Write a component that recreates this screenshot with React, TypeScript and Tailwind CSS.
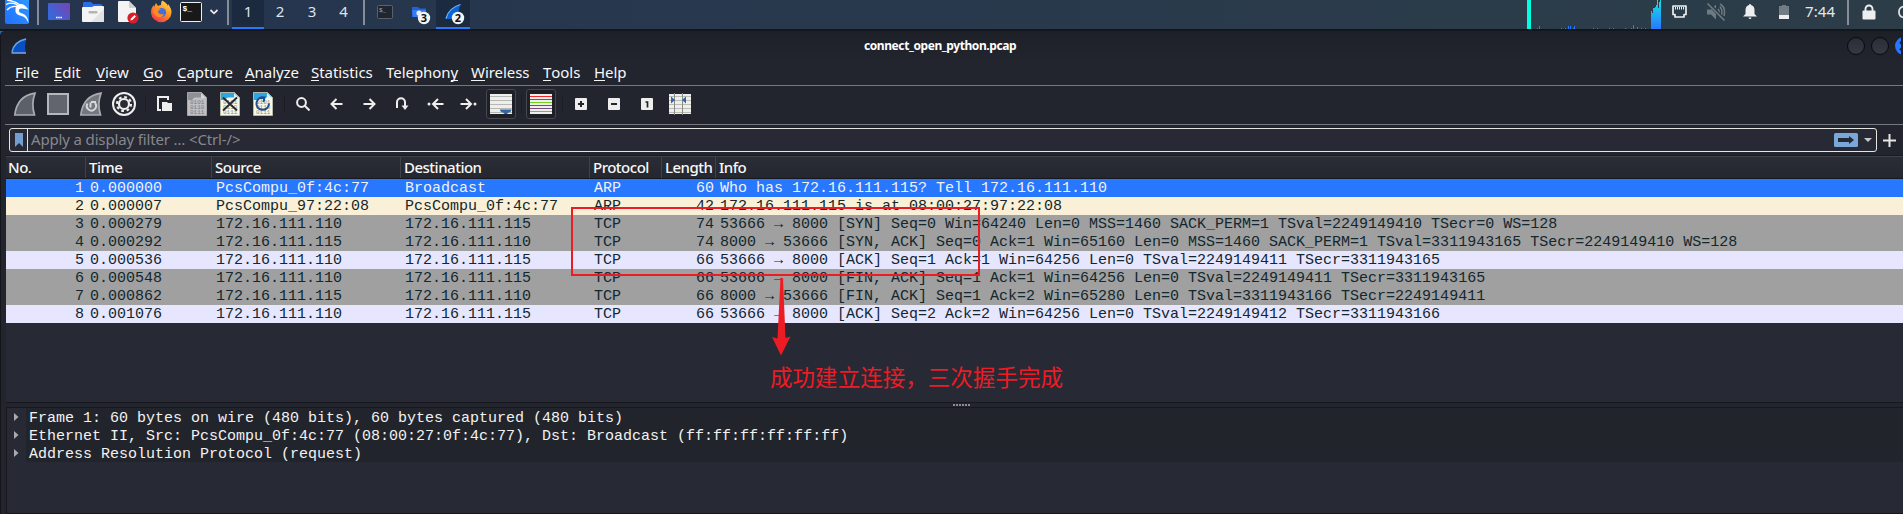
import React from "react";

const S = ({ w, h, c = "", children }: { w: number; h: number; c?: string; children: React.ReactNode }) => (
  <svg width={w} height={h} viewBox={`0 0 ${w} ${h}`} className={`block shrink-0 ${c}`}>
    {children}
  </svg>
);

const menus = [
  ["", "F", "ile", "w-[39px]"],
  ["", "E", "dit", "w-[42px]"],
  ["", "V", "iew", "w-[47px]"],
  ["", "G", "o", "w-[34px]"],
  ["", "C", "apture", "w-[68px]"],
  ["", "A", "nalyze", "w-[66px]"],
  ["", "S", "tatistics", "w-[75px]"],
  ["Telephon", "y", "", "w-[85px]"],
  ["", "W", "ireless", "w-[72px]"],
  ["", "T", "ools", "w-[51px]"],
  ["", "H", "elp", "w-[40px]"],
];

const rows = [
  ["1", "0.000000", "PcsCompu_0f:4c:77", "Broadcast", "ARP", "60", "Who has 172.16.111.115? Tell 172.16.111.110", "bg-[#2777ff] text-[#f2f2f2]"],
  ["2", "0.000007", "PcsCompu_97:22:08", "PcsCompu_0f:4c:77", "ARP", "42", "172.16.111.115 is at 08:00:27:97:22:08", "bg-[#faf0d7] text-[#12272e]"],
  ["3", "0.000279", "172.16.111.110", "172.16.111.115", "TCP", "74", "53666 → 8000 [SYN] Seq=0 Win=64240 Len=0 MSS=1460 SACK_PERM=1 TSval=2249149410 TSecr=0 WS=128", "bg-[#a0a0a0] text-[#12272e]"],
  ["4", "0.000292", "172.16.111.115", "172.16.111.110", "TCP", "74", "8000 → 53666 [SYN, ACK] Seq=0 Ack=1 Win=65160 Len=0 MSS=1460 SACK_PERM=1 TSval=3311943165 TSecr=2249149410 WS=128", "bg-[#a0a0a0] text-[#12272e]"],
  ["5", "0.000536", "172.16.111.110", "172.16.111.115", "TCP", "66", "53666 → 8000 [ACK] Seq=1 Ack=1 Win=64256 Len=0 TSval=2249149411 TSecr=3311943165", "bg-[#e7e6ff] text-[#12272e]"],
  ["6", "0.000548", "172.16.111.110", "172.16.111.115", "TCP", "66", "53666 → 8000 [FIN, ACK] Seq=1 Ack=1 Win=64256 Len=0 TSval=2249149411 TSecr=3311943165", "bg-[#a0a0a0] text-[#12272e]"],
  ["7", "0.000862", "172.16.111.115", "172.16.111.110", "TCP", "66", "8000 → 53666 [FIN, ACK] Seq=1 Ack=2 Win=65280 Len=0 TSval=3311943166 TSecr=2249149411", "bg-[#a0a0a0] text-[#12272e]"],
  ["8", "0.001076", "172.16.111.110", "172.16.111.115", "TCP", "66", "53666 → 8000 [ACK] Seq=2 Ack=2 Win=64256 Len=0 TSval=2249149412 TSecr=3311943166", "bg-[#e7e6ff] text-[#12272e]"],
];

const Info = ({ text }: { text: string }) => {
  const [a, b] = text.split("→");
  if (b === undefined) return <>{text}</>;
  return (
    <>
      {a}
      <span className="inline-block h-[18px] w-[9px] overflow-visible align-top">→</span>
      {b}
    </>
  );
};

const details = [
  "Frame 1: 60 bytes on wire (480 bits), 60 bytes captured (480 bits)",
  "Ethernet II, Src: PcsCompu_0f:4c:77 (08:00:27:0f:4c:77), Dst: Broadcast (ff:ff:ff:ff:ff:ff)",
  "Address Resolution Protocol (request)",
];

const Sep = ({ c }: { c: string }) => <div className={`h-[25px] w-[2px] shrink-0 bg-[#878d96] ${c}`} />;

const netBars = [[38, 1], [40, 3], [62, 1], [66, 1], [69, 3], [71, 3], [74, 1], [75, 3], [94, 1], [98, 1], [110, 1], [114, 1], [126, 1], [132, 1], [134, 4], [138, 2], [142, 1], [146, 1]];

function Panel() {
  return (
    <div className="flex h-[29px] items-start overflow-hidden bg-linear-to-r from-[#24344d] via-[#29394d] to-[#2c3d48]">
      <S w={27} h={25} c="ml-[4px]">
        <defs>
          <linearGradient id="kg" x1="0" y1="1" x2="1" y2="0"><stop offset="0" stopColor="#2270ff" /><stop offset="1" stopColor="#2c9bff" /></linearGradient>
        </defs>
        <rect x="1" y="-4" width="24" height="28" rx="2" fill="url(#kg)" />
        <path d="M2 4.500Q8 1.500 14 5.500M3 10Q8 5 14 7M3 0Q11 1 16 5" stroke="#fff" strokeWidth="1.300" fill="none" />
        <path d="M13 5Q18 2.500 21.500 6L24.500 9.500 20 8.800Q15.500 8 15 10 14.500 12.500 18.500 13.500 24 15.500 24.500 23 22 17 17.500 16 10.500 14.500 11.500 9 11.500 6 13 5Z" fill="#fff" />
      </S>
      <Sep c="ml-[6px]" />
      <S w={22} h={20} c="ml-[9px]">
        <defs><linearGradient id="dg" x1="0" y1="0.6" x2="1" y2="0"><stop offset="0" stopColor="#3569dd" /><stop offset="1" stopColor="#7b42b0" /></linearGradient></defs>
        <rect y="3" width="22" height="17" rx="1" fill="url(#dg)" />
        <path d="M8 17.5h6" stroke="#fff" strokeWidth="1.4" strokeDasharray="1.5 .7" />
      </S>
      <S w={22} h={23} c="ml-[12px]">
        <path d="M1 3q0-1 1-1h7l2 2h8q1 0 1 1v8H1z" fill="#2d6be8" />
        <path d="M0 8q0-1 1-1h9l2-1h9q1 0 1 1v14q0 1-1 1H1q-1 0-1-1z" fill="#f4f4f4" />
        <path d="M22 9v12q0 1-1 1H9z" fill="#e2e2e2" />
        <rect x="6.500" y="11" width="9" height="2.400" rx="1.200" fill="#b4b4b4" />
      </S>
      <S w={22} h={24} c="ml-[14px]">
        <path d="M0 2q0-1 1-1h10l7 7v13q0 1-1 1H1q-1 0-1-1z" fill="#f4f4f4" />
        <path d="M11 1l7 7h-6q-1 0-1-1z" fill="#cfcfcf" />
        <circle cx="15" cy="18" r="5.600" fill="#d81e26" />
        <path d="M12.500 20.500l.5-2 3.500-3.500 1.400 1.400-3.500 3.500z" fill="#fff" />
      </S>
      <S w={22} h={24} c="ml-[10px]">
        <defs>
          <linearGradient id="ff" x1=".8" y1="0" x2=".2" y2="1"><stop offset="0" stopColor="#ffe14d" /><stop offset=".45" stopColor="#ff9326" /><stop offset="1" stopColor="#f0304f" /></linearGradient>
        </defs>
        <path d="M12 0.500Q17 3 18 6L18 4Q22 9 21.500 13A10.300 10.300 0 0 1 1 13Q1 8 3.500 5L4 7 6 3 8 6Q10 5 11 5 11 2 12 0.500Z" fill="url(#ff)" />
        <circle cx="11.500" cy="12.500" r="4.600" fill="#3f6fe0" />
        <path d="M3 9Q8 7 11 9.500 8 10 8 12 9 15 14 14 12 18 8 17 3 15 3 9Z" fill="#ff8a22" />
      </S>
      <S w={22} h={23} c="ml-[8px]">
        <rect x=".5" y="2.500" width="21" height="19" rx="1" fill="#181818" stroke="#f0f0f0" />
        <text x="2.500" y="11" fontSize="8" fontWeight="bold" fill="#fff" fontFamily="Liberation Mono, monospace">$_</text>
      </S>
      <S w={10} h={20} c="ml-[7px]"><path d="M1.500 10l3.500 3.300L8.500 10" stroke="#e8e8e8" strokeWidth="1.800" fill="none" /></S>
      <Sep c="ml-[8px]" />
      <div className="ml-[3px] flex text-center text-[15px] leading-[22px] text-[#dfe3ea]">
        <div className="h-[29px] w-[32px] border-b-2 border-[#2777ff] bg-[#1c2a40]">1</div>
        <div className="w-[32px]">2</div>
        <div className="w-[32px]">3</div>
        <div className="w-[31px]">4</div>
      </div>
      <Sep c="ml-[4px]" />
      <S w={16} h={20} c="ml-[12px]">
        <rect x=".5" y="5.500" width="15" height="13" rx="1" fill="#20262f" stroke="#59616c" />
        <text x="2" y="12" fontSize="6" fill="#b0b4ba" fontFamily="Liberation Mono, monospace">$_</text>
      </S>
      <S w={20} h={27} c="ml-[18px]">
        <path d="M1 7h6l1.500 1.500H15V17H1z" fill="#2461d8" />
        <path d="M1 10h14v7H2z" fill="#377bf2" />
        <circle cx="8" cy="13" r="2.600" fill="#e8eefc" />
        <circle cx="13" cy="18" r="6.200" fill="#f4f4f4" />
        <text x="13" y="22" fontSize="11" fontWeight="bold" textAnchor="middle" fill="#111" fontFamily="Noto Sans, sans-serif">3</text>
      </S>
      <div className="ml-[5px] h-[29px] w-[34px] border-b-2 border-[#2777ff] bg-[#1c2a40]">
        <S w={34} h={27}>
          <path d="M9.500 19Q12 8 24.500 4.500 21 11 24 19z" fill="#0b63d6" />
          <path d="M10 18.500Q12.500 8 24.500 4.500" stroke="#6db1ef" strokeWidth="1.300" fill="none" />
          <circle cx="22" cy="18" r="6.200" fill="#f4f4f4" />
          <text x="22" y="22" fontSize="11" fontWeight="bold" textAnchor="middle" fill="#111" fontFamily="Noto Sans, sans-serif">2</text>
        </S>
      </div>
      <S w={162} h={29} c="ml-[1029px]">
        <defs><linearGradient id="cg" x1="0" y1="0" x2="0" y2="1"><stop offset="0" stopColor="#12e3ea" /><stop offset="1" stopColor="#2a78ff" /></linearGradient></defs>
        <rect x="28" width="4" height="29" fill="#00ffe0" />
        {netBars.map(([x, h], i) => <rect key={i} x={x} y={29 - h} width="1" height={h} fill="#2777ff" />)}
        <path d="M152 29V11h1v2h1V8h2V7h1V5h1V0h1v8h1V2h1V0h1v29z" fill="url(#cg)" />
      </S>
      <S w={16} h={20} c="ml-[11px]">
        <path d="M1 6h13v8.500h-2V17H3v-2.500H1z" fill="none" stroke="#eee" strokeWidth="1.700" strokeLinejoin="round" />
        <path d="M3.500 7v2.500M5.500 7v2.500M7.500 7v2.500M9.500 7v2.500M11.500 7v2.500" stroke="#eee" strokeWidth="1" />
      </S>
      <S w={20} h={22} c="ml-[18px]">
        <path d="M1 9.500h4l5-5v15l-5-5H1z" fill="#6f7b83" />
        <path d="M12 9q2.200 3 0 6M14 6.500q4 5.500 0 11M14 4q6 3 4 12" stroke="#6f7b83" strokeWidth="1.500" fill="none" />
        <path d="M2 3l17 18" stroke="#2b3b49" strokeWidth="3.500" /><path d="M1.500 3.500l17 17" stroke="#6f7b83" strokeWidth="1.700" />
      </S>
      <S w={14} h={20} c="ml-[17px]">
        <path d="M7 4q1 0 1 1 3.500 1 3.500 5v4l2.500 2.500H0L2.500 14v-4Q2.500 6 6 5q0-1 1-1zM5.500 17.500h3q-.3 1.500-1.500 1.500t-1.500-1.500z" fill="#eee" />
      </S>
      <S w={10} h={20} c="ml-[22px]"><path d="M0 6h3V5h4v1h3v9H0z" fill="#717c85" /><path d="M0 15h10v4H0z" fill="#eee" /></S>
      <div className="ml-[16px] w-[32px] shrink-0 text-[15px] leading-[22px] tracking-[0.1px] text-[#e6e6e6]">7:44</div>
      <Sep c="ml-[10px]" />
      <S w={14} h={20} c="ml-[13px]">
        <path d="M3.500 12V9a3.500 3.500 0 0 1 7 0v3" fill="none" stroke="#eee" strokeWidth="1.900" /><rect x=".5" y="10.500" width="13" height="9" rx="1" fill="#eee" />
      </S>
      <S w={7} h={24} c="ml-[20px]"><path d="M7.500 6.500a5.600 5.600 0 0 0 0 11" fill="none" stroke="#ddd" strokeWidth="1.800" /></S>
    </div>
  );
}

const Fin = ({ c, refresh = false }: { c: string; refresh?: boolean }) => (
  <S w={24} h={24} c={c}>
    <path d="M1.800 23Q4 4 22 1.200 18 12 21.500 23z" fill={refresh ? "#74787e" : "#5c6067"} stroke="#a9acb2" strokeWidth="1.700" />
    {refresh && <path d="M8.500 11.500a4.600 4.600 0 1 0 7.500-.5M11.500 15.500V10.500M17 10h-5" fill="none" stroke="#d5d8dd" strokeWidth="2" />}
  </S>
);

const Doc = ({ c, kind }: { c: string; kind: "save" | "close" | "reload" }) => {
  const dim = kind === "save";
  return (
    <S w={20} h={24} c={c}>
      <path d="M.5.500h14l5 5v18H.5z" fill={dim ? "#bfc0c6" : "#f8f8e6"} stroke={dim ? "#a5a6ac" : "#b5b7a8"} />
      <path d="M1 1h13.500L19 5.500H8Q6 6 5 8H1z" fill={dim ? "#8e9097" : "#2ba8e4"} />
      <path d="M14 1v5h5z" fill={dim ? "#d5d6da" : "#e4f0f5"} />
      <g fontSize="6" fontFamily="Liberation Mono, monospace" fill={dim ? "#77797f" : "#8d8e85"}>
        <text x="3" y="12">0101</text><text x="3" y="17">0110</text><text x="3" y="22">0111</text>
      </g>
      {kind === "close" && <path d="M3 5.500l14 13M17 5.500l-14 13" stroke="#252a30" strokeWidth="1.900" />}
      {kind === "reload" && <path d="M11.500 5.500a6.300 6.300 0 1 0 4.500 6M7.500 6.500l4-1L10.500 10" fill="none" stroke="#1f4e94" strokeWidth="2" />}
    </S>
  );
};

const Div = ({ c }: { c: string }) => <div className={`h-[18px] w-px shrink-0 bg-[#1b1d25] ${c}`} />;
const st = { fill: "none", stroke: "#eeeeec", strokeWidth: 2 };

function Toolbar() {
  return (
    <div className="ml-[4px] flex h-[40px] items-center border-y border-[#77787e] pb-[2px] pl-[8px]">
      <Fin c="" />
      <S w={22} h={22} c="ml-[10px]"><rect x="1" y="1" width="20" height="20" fill="#62656d" stroke="#b4b7be" strokeWidth="2" /></S>
      <Fin c="ml-[10px]" refresh />
      <S w={24} h={24} c="ml-[9px]">
        <circle cx="12" cy="12" r="11" fill="#2a2c33" stroke="#f0f0f0" strokeWidth="2" />
        <circle cx="12" cy="12" r="5" fill="none" stroke="#f0f0f0" strokeWidth="2.200" />
        <circle cx="12" cy="12" r="7" fill="none" stroke="#f0f0f0" strokeWidth="2.200" strokeDasharray="2.750 2.750" />
      </S>
      <Div c="ml-[9px]" />
      <S w={15} h={16} c="ml-[11px]"><path d="M4 14H1V1h10v3" {...st} /><path d="M5 6h5l1 1h4v8H5z" fill="#eeeeec" /></S>
      <Doc c="ml-[15px]" kind="save" />
      <Doc c="ml-[13px]" kind="close" />
      <Doc c="ml-[13px]" kind="reload" />
      <Div c="ml-[11px]" />
      <S w={14} h={14} c="ml-[11px]"><circle cx="5.500" cy="5.500" r="4.400" {...st} /><path d="M8.500 8.500l5 5" {...st} /></S>
      <S w={13} h={12} c="ml-[20px]"><path d="M12.500 6H2M6.500 1L1.500 6l5 5" {...st} /></S>
      <S w={13} h={12} c="ml-[20px]"><path d="M.5 6H11M6.500 1l5 5-5 5" {...st} /></S>
      <S w={13} h={14} c="ml-[20px]"><path d="M1 11V5.200a4 4 0 0 1 8 0V11" {...st} /><path d="M5.500 8.500h7L9 13z" fill="#eeeeec" /></S>
      <S w={17} h={12} c="ml-[18px]"><circle cx="2" cy="6" r="1.500" fill="#eeeeec" /><path d="M16.500 6H6.500M11 1L6 6l5 5" {...st} /></S>
      <S w={17} h={12} c="ml-[16px]"><circle cx="15" cy="6" r="1.500" fill="#eeeeec" /><path d="M.5 6H10M6 1l5 5-5 5" {...st} /></S>
      <div className="ml-[9px] flex h-[30px] w-[30px] shrink-0 items-center justify-center rounded-[3px] border border-[#454850] bg-[#1e2028]">
        <S w={22} h={20}>
          <rect width="22" height="20" fill="#eeeeec" />
          <path d="M0 2.500h22M0 6.500h22M0 10.500h22M0 14.500h22M0 18.500h22" stroke="#b6b8b3" />
          <path d="M10 15.500h11.500q0 2.500-3 3l-1.500 1.500h-2.500L13 18.500q-3-.5-3-3z" fill="#3465a4" />
        </S>
      </div>
      <Div c="ml-[5px]" />
      <div className="ml-[4px] flex h-[30px] w-[30px] shrink-0 items-center justify-center rounded-[3px] border border-[#454850] bg-[#1e2028]">
        <S w={22} h={20}>
          <rect width="22" height="20" fill="#eeeeec" />
          <path d="M0 2.500h22" stroke="#ef2929" /><path d="M0 5.500h22M0 11.500h22" stroke="#3465a4" /><path d="M0 8.500h22" stroke="#73d216" /><path d="M0 14.500h22" stroke="#75507b" /><path d="M0 17.500h22" stroke="#c4a000" />
        </S>
      </div>
      <Div c="ml-[6px]" />
      <S w={12} h={12} c="ml-[12px]"><rect width="12" height="12" rx="1" fill="#eeeeec" /><path d="M3 6h6M6 3v6" stroke="#22252d" strokeWidth="2" /></S>
      <S w={12} h={12} c="ml-[21px]"><rect width="12" height="12" rx="1" fill="#eeeeec" /><path d="M3 6h6" stroke="#22252d" strokeWidth="2" /></S>
      <S w={12} h={12} c="ml-[21px]"><rect width="12" height="12" rx="1" fill="#eeeeec" /><path d="M4.500 4H6.500v5.500" fill="none" stroke="#22252d" strokeWidth="1.700" /></S>
      <S w={22} h={22} c="ml-[16px]">
        <rect width="22" height="20" y="1" fill="#eeeeec" />
        <path d="M0 3.500h22M0 7.500h22M0 11.500h22M0 15.500h22M0 19.500h22" stroke="#babdb6" />
        <path d="M5.500 0v22M13.500 0v22" stroke="#888a85" />
        <path d="M2 3.500L6 7l-4 3.500zM17 3.500L13 7l4 3.500z" fill="#3465a4" />
      </S>
    </div>
  );
}

export default function App() {
  return (
    <div className="relative h-[514px] w-[1903px] overflow-hidden bg-[#23252e] font-['Noto_Sans',sans-serif] whitespace-nowrap">
      <Panel />
      <div className="h-[2px] bg-[#12161d]" />
      <div className="bg-[#2c66a8]">
        <div className="flex h-[31px] items-center rounded-tl-[5px] border-l border-[#14151b] bg-linear-to-b from-[#1e2028] to-[#23252e] pb-[1px]">
          <S w={16} h={16} c="ml-[10px]">
            <path d="M.5 15.500Q2 3 15.500.500 13 8 15 15.500z" fill="#0a4fc0" />
            <path d="M1 14Q3 3.500 15 1" stroke="#5fa8ea" strokeWidth="1.400" fill="none" /><path d="M.5 15h14.500" stroke="#b8d2ee" />
          </S>
          <div className="ml-[837px] w-[152px] shrink-0 text-[12px] leading-[18px] font-bold tracking-[-0.42px] text-white">connect_open_python.pcap</div>
          <S w={56} h={20} c="ml-[829px]">
            <defs><linearGradient id="wb" x1="0" y1="0" x2="0" y2="1"><stop offset="0" stopColor="#2a2c36" /><stop offset="1" stopColor="#363945" /></linearGradient></defs>
            <circle cx="11" cy="10" r="8.500" fill="url(#wb)" stroke="#08090c" /><circle cx="35" cy="10" r="8.500" fill="url(#wb)" stroke="#08090c" />
            <circle cx="59" cy="10" r="9" fill="#2777ff" /><path d="M55 6l8 8M55 14l8-8" stroke="#0d1f42" strokeWidth="2" />
          </S>
        </div>
      </div>
      <div className="h-[452px] border-l border-[#14151b]">
        <div className="flex h-[23px] pl-[14px] text-[15px] leading-[20px] tracking-[-0.05px] text-[#f8f8f8]">
          {menus.map(([a, u, b, w]) => (
            <div key={a + u} className={`shrink-0 ${w}`}>
              {a}<span className="inline-block h-[19px] border-b border-[#f4f4f4] align-top">{u}</span>{b}
            </div>
          ))}
        </div>
        <Toolbar />
        <div className="flex h-[30px] items-center pl-[8px]">
          <div className="flex h-[24px] w-[1868px] items-center rounded-[3px] border border-[#e6e6e0] bg-[#272934]">
            <div className="flex h-full w-[18px] items-center justify-center border-r border-[#e6e6e0]">
              <S w={8} h={14}><path d="M0 0h8v14l-4-4-4 4z" fill="#729fcf" /></S>
            </div>
            <div className="flex-1 pb-[2px] pl-[3px] text-[15px] leading-[20px] tracking-[-0.15px] text-[#87888c]">Apply a display filter … &lt;Ctrl-/&gt;</div>
            <S w={24} h={14}><rect width="24" height="14" rx="1.500" fill="#7ba6d8" /><path d="M4 5h11V3l5 4-5 4V9H4z" fill="#242833" /></S>
            <S w={8} h={6} c="mr-[4px] ml-[6px]"><path d="M0 1h8L4 5z" fill="#c8c9cb" /></S>
          </div>
          <S w={13} h={13} c="ml-[6px]"><path d="M6.500 0v13M0 6.500h13" stroke="#e6e6e6" strokeWidth="2" /></S>
        </div>
        <div className="ml-[5px] h-px bg-[#191b22]" />
        <div className="ml-[5px] flex h-[23px] border-t border-b border-t-[#3f424b] border-b-[#16181e] bg-linear-to-b from-[#2a2d36] to-[#242730] text-[15px] leading-[20px] font-medium tracking-[-0.5px] text-[#f8f8f8]">
          <div className="w-[80px] border-r border-[#3f424b] pl-[2px]">No.</div>
          <div className="w-[126px] border-r border-[#3f424b] pl-[3px]">Time</div>
          <div className="w-[189px] border-r border-[#3f424b] pl-[3px]">Source</div>
          <div className="w-[189px] border-r border-[#3f424b] pl-[3px]">Destination</div>
          <div className="w-[72px] border-r border-[#3f424b] pl-[3px]">Protocol</div>
          <div className="w-[54px] border-r border-[#3f424b] pl-[3px]">Length</div>
          <div className="pl-[3px]">Info</div>
        </div>
        <div className="ml-[5px] h-[224px] border-b border-[#16181e] bg-[#272934] font-['Liberation_Mono',monospace] text-[15px] leading-[19px]">
          {rows.map(([n, t, s, d, p, l, info, c]) => (
            <div key={n} className={`flex h-[18px] ${c}`}>
              <div className="w-[78px] text-right">{n}</div>
              <div className="w-[126px] pl-[6px]">{t}</div>
              <div className="w-[189px] pl-[6px]">{s}</div>
              <div className="w-[189px] pl-[6px]">{d}</div>
              <div className="w-[72px] pl-[6px]">{p}</div>
              <div className="w-[54px] text-right">{l}</div>
              <div className="pl-[6px]"><Info text={info} /></div>
            </div>
          ))}
        </div>
        <div className="ml-[5px] flex h-[4px] items-center justify-center">
          <S w={17} h={2} c="ml-[14px]"><path d="M0 1h17" stroke="#8c8d92" strokeWidth="2" strokeDasharray="2 1" /></S>
        </div>
        <div className="ml-[5px] h-[107px] border-t border-b border-l border-[#16181e] bg-[#272934] font-['Liberation_Mono',monospace] text-[15px] leading-[21px] text-[#f2f2f2]">
          {details.map((d) => (
            <div key={d} className="flex h-[18px]">
              <div className="flex w-[19px] items-center pl-[7px]"><S w={5} h={8}><path d="M0 0l4.500 4L0 8z" fill="#a9aaad" /></S></div>
              <div className="flex-1 bg-[#22242c] pl-[3px]">{d}</div>
            </div>
          ))}
        </div>
      </div>
      <svg width="420" height="160" className="absolute top-[200px] left-[565px]">
        <rect x="7" y="8" width="407" height="67" fill="none" stroke="#ed1c24" strokeWidth="2" />
        <path d="M215.500 78h2.500l2.500 60 5-1.500L216 155.500 207 137l5.500 1.500z" fill="#ed1c24" />
      </svg>
      <div className="absolute top-[360px] left-[770px] font-['Noto_Sans_CJK_SC',sans-serif] text-[22.55px] leading-[32px] text-[#ed1c24]">成功建立连接，三次握手完成</div>
    </div>
  );
}
